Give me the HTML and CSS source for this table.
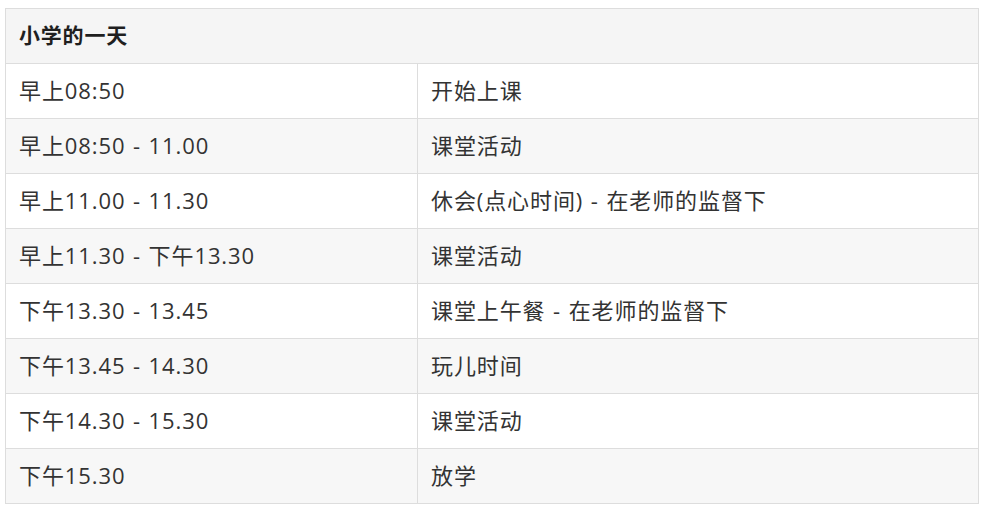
FILE: index.html
```html
<!DOCTYPE html>
<html lang="zh">
<head>
<meta charset="utf-8">
<link rel="stylesheet" href="styles.css">
</head>
<body>
<table class="schedule">
  <colgroup>
    <col class="col-time">
    <col class="col-desc">
  </colgroup>
  <thead>
    <tr><th colspan="2">小学的一天</th></tr>
  </thead>
  <tbody>
    <tr><td>早上08:50</td><td>开始上课</td></tr>
    <tr><td>早上08:50 - 11.00</td><td>课堂活动</td></tr>
    <tr><td>早上11.00 - 11.30</td><td>休会(点心时间) - 在老师的监督下</td></tr>
    <tr><td>早上11.30 - 下午13.30</td><td>课堂活动</td></tr>
    <tr><td>下午13.30 - 13.45</td><td>课堂上午餐 - 在老师的监督下</td></tr>
    <tr><td>下午13.45 - 14.30</td><td>玩儿时间</td></tr>
    <tr><td>下午14.30 - 15.30</td><td>课堂活动</td></tr>
    <tr><td>下午15.30</td><td>放学</td></tr>
  </tbody>
</table>
</body>
</html>
```

FILE: styles.css
```css
html, body {
  margin: 0;
  padding: 0;
  background: #ffffff;
}
body {
  padding: 8px 5px 0 5px;
  font-family: "Open Sans", "Noto Sans CJK SC", sans-serif;
  color: #333333;
}
.schedule {
  width: 974px;
  border-collapse: collapse;
  table-layout: fixed;
  font-size: 22px;
  line-height: 26px;
}
.col-time {
  width: 412px;
}
.schedule th,
.schedule td {
  border: 1px solid #dddddd;
  height: 52px;
  padding: 0 12px 2px 13px;
  text-align: left;
  vertical-align: middle;
  letter-spacing: 0.9px;
  word-spacing: 1px;
  font-weight: 400;
}
.schedule th {
  background: #f5f5f5;
  color: #1f1f1f;
  font-weight: bold;
  font-size: 21px;
  letter-spacing: 0.8px;
}
.schedule tbody tr:nth-child(even) td {
  background: #f7f7f7;
}
```
